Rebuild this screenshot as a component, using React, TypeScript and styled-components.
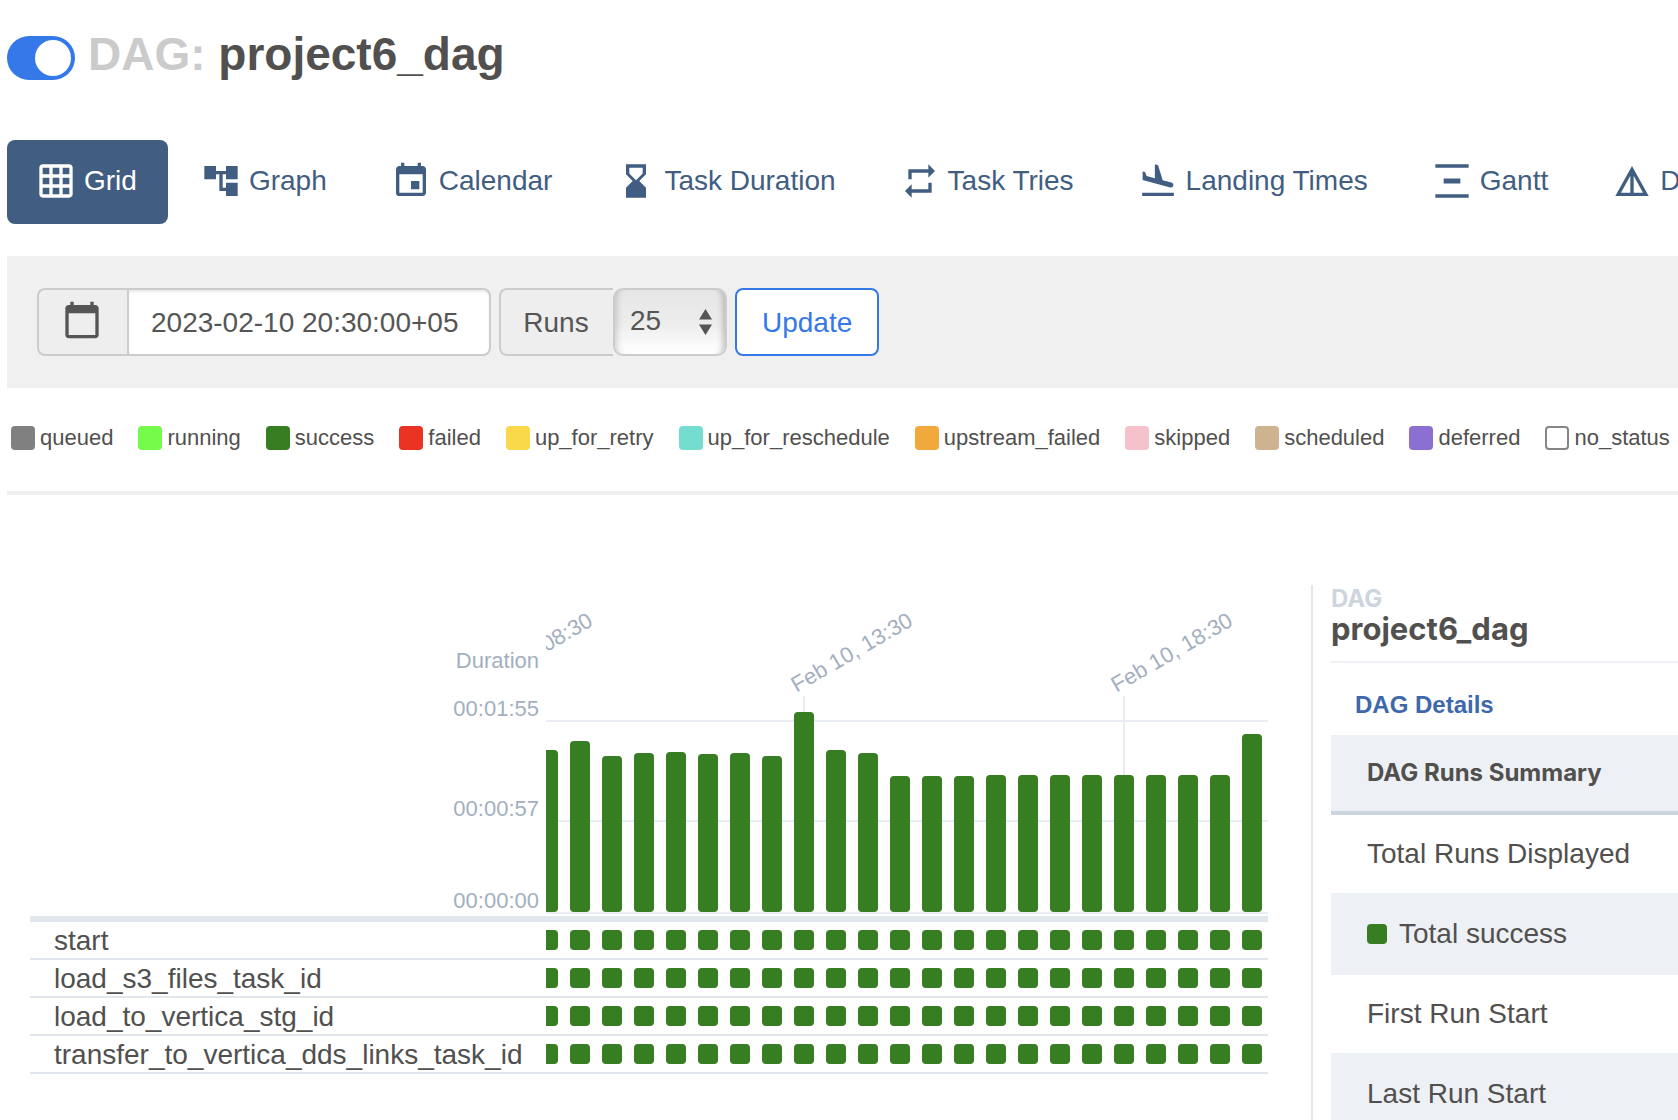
import React, { useState } from "react";
import styled, { createGlobalStyle } from "styled-components";
import {
  MdAccountTree,
  MdCalendarToday,
  MdEvent,
  MdFlightLand,
  MdGridOn,
  MdHourglassBottom,
  MdRepeat,
} from "react-icons/md";

const color = {
  text: "#51504f",
  control: "#555555",
  nav: "#415e82",
  accent: "#3579e8",
  success: "#377d22",
  line: "#e2e6ed",
  stripe: "#edf0f5",
  axis: "#a3afc0",
};

const sans = `"Liberation Sans", Arial, sans-serif`;
const display = `Inter, "Liberation Sans", sans-serif`;

const GlobalStyle = createGlobalStyle`
  *, *::before, *::after { box-sizing: border-box; }
  body {
    margin: 0;
    background: #ffffff;
    color: ${color.text};
    font-family: ${sans};
    font-size: 28px;
    line-height: 36px;
  }
  button, input, select { font: inherit; }
`;

const Page = styled.div`
  height: 100vh;
  padding: 24px 0 0 7px;
  overflow: hidden;
`;

const Header = styled.header`
  display: flex;
  align-items: center;
  gap: 13px;
  height: 60px;
`;

const Toggle = styled.input`
  appearance: none;
  flex: none;
  display: flex;
  width: 68px;
  height: 44px;
  margin: 8px 0 0;
  padding: 4px;
  border-radius: 22px;
  background: #cccccc;
  cursor: pointer;

  &::before {
    content: "";
    width: 36px;
    height: 36px;
    border-radius: 50%;
    background: #ffffff;
  }
  &:checked {
    justify-content: flex-end;
    background: ${color.accent};
  }
`;

const Title = styled.h1`
  margin: 0;
  font-size: 46px;
  font-weight: 700;
  line-height: 60px;
  white-space: nowrap;
`;

const Muted = styled.span`
  color: #cbcbcb;
`;

const Nav = styled.nav`
  display: flex;
  gap: 4px;
  margin-top: 56px;
`;

const NavLink = styled.a<{ $active?: boolean }>`
  display: flex;
  flex: none;
  align-items: center;
  gap: 8px;
  height: 84px;
  padding: 0 31px 2px 29px;
  border-radius: 8px;
  background: ${(p) => (p.$active ? color.nav : "transparent")};
  color: ${(p) => (p.$active ? "#ffffff" : color.nav)};
  text-decoration: none;
  white-space: nowrap;

  svg {
    flex: none;
    width: 40px;
    height: 40px;
  }
`;

const FilterBar = styled.form`
  display: flex;
  gap: 8px;
  margin-top: 32px;
  padding: 32px 30px;
  background: #f0f0f0;
`;

const Group = styled.div`
  display: flex;
  height: 68px;
`;

const Addon = styled.label<{ $width: number }>`
  display: flex;
  align-items: center;
  justify-content: center;
  width: ${(p) => p.$width}px;
  padding: 2px 2px 0 0;
  border: 2px solid #cccccc;
  border-right: 0;
  border-radius: 8px 0 0 8px;
  background: #eeeeee;
  color: ${color.control};

  svg {
    width: 40px;
    height: 40px;
    margin-bottom: 6px;
  }
`;

const DateInput = styled.input`
  width: 364px;
  padding: 2px 22px 0;
  border: 2px solid #cccccc;
  border-radius: 0 8px 8px 0;
  outline: 0;
  background: #ffffff;
  box-shadow: inset 0 2px 2px rgba(0, 0, 0, 0.08);
  color: ${color.control};
`;

const SelectBox = styled.div`
  position: relative;
  display: flex;

  svg {
    position: absolute;
    top: 20px;
    right: 14px;
    width: 14px;
    height: 28px;
    pointer-events: none;
  }
`;

const Select = styled.select`
  appearance: none;
  width: 114px;
  padding: 0 15px 2px;
  border: 2px solid #cccccc;
  border-radius: 10px;
  outline: 0;
  background: linear-gradient(#e6e6e6, #ececec 50%, #ffffff);
  box-shadow: inset 8px 0 6px -6px rgba(0, 0, 0, 0.16), inset -8px 0 6px -6px rgba(0, 0, 0, 0.24);
  color: ${color.control};
`;

const UpdateButton = styled.button`
  height: 68px;
  padding: 2px 25px 0;
  border: 2px solid ${color.accent};
  border-radius: 8px;
  background: #ffffff;
  color: ${color.accent};
  cursor: pointer;
`;

const Legend = styled.ul`
  display: flex;
  gap: 25px;
  margin: 0;
  padding: 38px 0 41px 4px;
  border-bottom: 4px solid #f0f0f0;
  list-style: none;
`;

const LegendItem = styled.li`
  display: flex;
  flex: none;
  align-items: center;
  gap: 5px;
  font-size: 22px;
  line-height: 24px;
  white-space: nowrap;
`;

const Swatch = styled.span<{ $fill: string; $outlined?: boolean }>`
  width: 24px;
  height: 24px;
  border: ${(p) => (p.$outlined ? "2px solid #868686" : "0")};
  border-radius: 4px;
  background: ${(p) => p.$fill};
`;

const Main = styled.main`
  display: grid;
  grid-template-columns: minmax(0, 1fr) 367px;
  margin-top: 90px;
`;

const GridPane = styled.section`
  padding: 0 43px 0 23px;
`;

const RunTable = styled.table`
  width: 100%;
  table-layout: fixed;
  border-spacing: 0;

  th, td {
    padding: 0;
    font-weight: 400;
    text-align: left;
    vertical-align: top;
  }
  thead th, thead td { border-bottom: 6px solid ${color.line}; }
  tbody th, tbody td { border-bottom: 2px solid ${color.line}; }
`;

const NameColumn = styled.col`
  width: 516px;
`;

const Axis = styled.div`
  display: grid;
  grid-template-rows: 48px 100px 92px 27px;
  padding: 64px 7px 0 0;
  color: ${color.axis};
  font-size: 22px;
  line-height: 24px;
  text-align: right;
`;

const Plot = styled.div`
  position: relative;
  display: flex;
  align-items: flex-end;
  justify-content: flex-end;
  height: 331px;
  padding-bottom: 4px;
  overflow: hidden;
`;

const GridLine = styled.span<{ $bottom: number }>`
  position: absolute;
  right: 0;
  bottom: ${(p) => p.$bottom}px;
  left: 0;
  height: 2px;
  background: #e9edf3;
`;

const RunColumn = styled.div`
  position: relative;
  display: flex;
  flex: none;
  align-items: flex-end;
  justify-content: center;
  width: 32px;
  height: 216px;
`;

const Bar = styled.button`
  position: relative;
  width: 20px;
  padding: 0;
  border: 0;
  border-radius: 4px;
  background: ${color.success};
  cursor: pointer;
`;

const RunTick = styled.span`
  position: absolute;
  top: 0;
  bottom: 0;
  left: 15px;
  width: 2px;
  background: #e9edf3;
`;

const RunLabel = styled.span`
  position: absolute;
  bottom: 215px;
  left: 11px;
  color: ${color.axis};
  font-size: 22px;
  line-height: 24px;
  white-space: nowrap;
  transform: rotate(-30deg);
  transform-origin: 0 100%;
`;

const TaskName = styled.div`
  height: 36px;
  padding-left: 24px;
  line-height: 38px;
  white-space: nowrap;
`;

const Cells = styled.div`
  display: flex;
  align-items: center;
  justify-content: flex-end;
  gap: 12px;
  height: 36px;
  padding-right: 6px;
  overflow: hidden;
`;

const Status = styled.span`
  flex: none;
  width: 20px;
  height: 20px;
  border-radius: 4px;
  background: ${color.success};
`;

const Details = styled.aside`
  padding-left: 18px;
  border-left: 2px solid ${color.line};
`;

const DetailsHeading = styled.header`
  padding-bottom: 16px;
  border-bottom: 2px solid ${color.stripe};
  font-family: ${display};
  font-weight: 700;
`;

const Kicker = styled.div`
  color: #cdd5df;
  font-size: 24px;
  line-height: 28px;
`;

const DagName = styled.h2`
  margin: 0;
  font-size: 31px;
  font-weight: 700;
  line-height: 32px;
`;

const DetailsLink = styled.a`
  display: block;
  padding: 24px 24px 12px;
  color: #3d69ac;
  font-size: 24px;
  font-weight: 700;
  text-decoration: none;
`;

const Summary = styled.table`
  width: 100%;
  border-spacing: 0;

  th, td {
    height: 80px;
    padding: 0 36px;
    border-bottom: 2px solid ${color.stripe};
    font-weight: 400;
    text-align: left;
    white-space: nowrap;
  }
  thead th {
    border-bottom: 4px solid #cbd5e0;
    background: ${color.stripe};
    font-family: ${display};
    font-size: 24px;
    font-weight: 700;
  }
  tbody tr:nth-child(even) { background: ${color.stripe}; }
`;

const SummaryLabel = styled.span`
  display: flex;
  align-items: center;
  gap: 12px;
`;

const VerticalDistributeIcon = () => (
  <svg viewBox="0 0 24 24" fill="currentColor" aria-hidden="true">
    <path d="M22 2v2H2V2h20zM7 10.5v3h10v-3H7zM2 20v2h20v-2H2z" />
  </svg>
);

const DetailsIcon = () => (
  <svg viewBox="0 0 24 24" fill="currentColor" aria-hidden="true">
    <path d="M12 3 2 21h20L12 3zm1 5.92L18.6 19H13V8.92zm-2 0V19H5.4L11 8.92z" />
  </svg>
);

const SortArrows = () => (
  <svg viewBox="0 0 14 28" fill={color.control} aria-hidden="true">
    <path d="M6.5 1L13 11.5H0zM6.5 27L0 16.5h13z" />
  </svg>
);

const views = [
  { name: "Grid", icon: <MdGridOn /> },
  { name: "Graph", icon: <MdAccountTree /> },
  { name: "Calendar", icon: <MdEvent /> },
  { name: "Task Duration", icon: <MdHourglassBottom /> },
  { name: "Task Tries", icon: <MdRepeat /> },
  { name: "Landing Times", icon: <MdFlightLand /> },
  { name: "Gantt", icon: <VerticalDistributeIcon /> },
  { name: "Details", icon: <DetailsIcon /> },
];

const states = [
  { name: "queued", fill: "#808080" },
  { name: "running", fill: "#75fb4c" },
  { name: "success", fill: color.success },
  { name: "failed", fill: "#ea3323" },
  { name: "up_for_retry", fill: "#f9d949" },
  { name: "up_for_reschedule", fill: "#75ddcf" },
  { name: "upstream_failed", fill: "#f2a93b" },
  { name: "skipped", fill: "#f5c2cb" },
  { name: "scheduled", fill: "#cdb38f" },
  { name: "deferred", fill: "#8c6fd3" },
  { name: "no_status", fill: "#ffffff", outlined: true },
];

const runs = [
  160, 158, 162, 171, 156, 159, 160, 158, 159, 156, 200, 162, 159,
  136, 136, 136, 137, 137, 137, 137, 137, 137, 137, 137, 178,
].map((height, i) => ({
  height,
  label: i % 10 === 0 ? `Feb 10, ${String(8 + i / 2).padStart(2, "0")}:30` : "",
}));

const tasks = [
  "start",
  "load_s3_files_task_id",
  "load_to_vertica_stg_id",
  "transfer_to_vertica_dds_links_task_id",
];

export default function App() {
  const [active, setActive] = useState(true);
  const [baseDate, setBaseDate] = useState("2023-02-10 20:30:00+05");

  return (
    <>
      <GlobalStyle />
      <Page>
        <Header>
          <Toggle
            type="checkbox"
            aria-label="Pause or unpause DAG"
            checked={active}
            onChange={(e) => setActive(e.target.checked)}
          />
          <Title>
            <Muted>DAG:</Muted> project6_dag
          </Title>
        </Header>

        <Nav>
          {views.map((view, i) => (
            <NavLink key={view.name} href="#" $active={i === 0}>
              {view.icon}
              {view.name}
            </NavLink>
          ))}
        </Nav>

        <FilterBar onSubmit={(e) => e.preventDefault()}>
          <Group>
            <Addon htmlFor="base-date" aria-label="Base date" $width={90}>
              <MdCalendarToday />
            </Addon>
            <DateInput id="base-date" value={baseDate} onChange={(e) => setBaseDate(e.target.value)} />
          </Group>
          <Group>
            <Addon htmlFor="num-runs" $width={114}>Runs</Addon>
            <SelectBox>
              <Select id="num-runs" defaultValue="25">
                <option>5</option>
                <option>25</option>
                <option>50</option>
              </Select>
              <SortArrows />
            </SelectBox>
          </Group>
          <UpdateButton type="submit">Update</UpdateButton>
        </FilterBar>

        <Legend>
          {states.map((s) => (
            <LegendItem key={s.name}>
              <Swatch $fill={s.fill} $outlined={s.outlined} />
              {s.name}
            </LegendItem>
          ))}
        </Legend>

        <Main>
          <GridPane>
            <RunTable>
              <colgroup>
                <NameColumn />
                <col />
              </colgroup>
              <thead>
                <tr>
                  <th scope="col">
                    <Axis>
                      <span>Duration</span>
                      <span>00:01:55</span>
                      <span>00:00:57</span>
                      <span>00:00:00</span>
                    </Axis>
                  </th>
                  <td>
                    <Plot>
                      <GridLine $bottom={194} />
                      <GridLine $bottom={94} />
                      <GridLine $bottom={2} />
                      {runs.map((run, i) => (
                        <RunColumn key={i}>
                          {run.label && <RunTick />}
                          {run.label && <RunLabel>{run.label}</RunLabel>}
                          <Bar aria-label={`Run ${i + 1}`} style={{ height: run.height }} />
                        </RunColumn>
                      ))}
                    </Plot>
                  </td>
                </tr>
              </thead>
              <tbody>
                {tasks.map((task) => (
                  <tr key={task}>
                    <th scope="row">
                      <TaskName>{task}</TaskName>
                    </th>
                    <td>
                      <Cells>
                        {runs.map((_, i) => (
                          <Status key={i} />
                        ))}
                      </Cells>
                    </td>
                  </tr>
                ))}
              </tbody>
            </RunTable>
          </GridPane>

          <Details>
            <DetailsHeading>
              <Kicker>DAG</Kicker>
              <DagName>project6_dag</DagName>
            </DetailsHeading>
            <DetailsLink href="#">DAG Details</DetailsLink>
            <Summary>
              <thead>
                <tr>
                  <th scope="col">DAG Runs Summary</th>
                </tr>
              </thead>
              <tbody>
                <tr>
                  <td>Total Runs Displayed</td>
                </tr>
                <tr>
                  <td>
                    <SummaryLabel>
                      <Status />
                      Total success
                    </SummaryLabel>
                  </td>
                </tr>
                <tr>
                  <td>First Run Start</td>
                </tr>
                <tr>
                  <td>Last Run Start</td>
                </tr>
              </tbody>
            </Summary>
          </Details>
        </Main>
      </Page>
    </>
  );
}
